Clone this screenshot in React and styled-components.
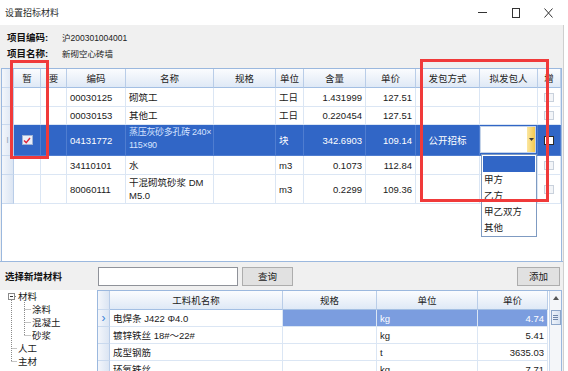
import React from 'react';
import styled, { createGlobalStyle } from 'styled-components';

const FONT = `"Liberation Sans", "Noto Sans CJK SC", sans-serif`;

const Global = createGlobalStyle`
  html, body { margin: 0; padding: 0; background: #fff; }
  body {
    font-family: ${FONT};
    font-size: 9.5px;
    color: #1a1a1a;
    width: 568px;
    height: 371px;
    overflow: hidden;
  }
  * { box-sizing: border-box; }
`;

const Page = styled.div`
  position: relative;
  width: 568px;
  height: 371px;
  display: flex;
  flex-direction: column;
  background: #fff;
`;

/* ---------- title bar ---------- */
const TitleBar = styled.div`
  height: 25px;
  display: flex;
  align-items: center;
  justify-content: space-between;
  padding-left: 5px;
  background: #fff;
  flex-shrink: 0;
`;
const Title = styled.span`
  font-size: 9px;
  color: #2a2a2a;
`;
const Controls = styled.div`
  display: flex;
  padding-right: 3px;
`;
const CtrlBtn = styled.div`
  width: 33px;
  height: 25px;
  display: flex;
  align-items: center;
  justify-content: center;
`;

/* ---------- body ---------- */
const Body = styled.div`
  width: 564px;
  flex: 1;
  background: #f0f0f0;
  border-right: 1px solid #cfcfcf;
  display: flex;
  flex-direction: column;
`;
const Info = styled.div`
  height: 43px;
  padding: 4px 0 0 7px;
  flex-shrink: 0;
`;
const InfoRow = styled.div`
  display: flex;
  align-items: center;
  height: 16px;
`;
const InfoLabel = styled.span`
  width: 55px;
  font-weight: bold;
  font-size: 9.5px;
  color: #111;
`;
const InfoValue = styled.span`
  font-size: 8.5px;
  color: #222;
`;

/* ---------- top grid ---------- */
const topCols = [12, 27, 26, 59, 88, 62, 28, 62, 50, 64, 58, 23];
const topTemplate = topCols.map((c) => c + 'px').join(' ');

const TopGrid = styled.div`
  height: 193px;
  margin: 0 1px 0 1px;
  background: #fff;
  border: 1px solid #9bb8de;
  border-bottom: none;
  flex-shrink: 0;
`;
const Row = styled.div`
  display: grid;
  grid-template-columns: ${(p) => p.$template};
  height: ${(p) => p.$h}px;
`;
const HeadCell = styled.div`
  display: flex;
  align-items: center;
  justify-content: center;
  background: linear-gradient(#fbfcfe, #dfe9f6);
  border-right: 1px solid #b9cde8;
  border-bottom: 1px solid #a3bfe3;
  color: #222;
  white-space: nowrap;
  overflow: hidden;
`;
const RowHead = styled.div`
  display: flex;
  align-items: center;
  justify-content: center;
  background: linear-gradient(to right, #f3f6fb, #dbe5f3);
  border-right: 1px solid #b9cde8;
  border-bottom: 1px solid #c9d9ee;
  color: ${(p) => (p.$accent ? '#3b7ed8' : '#9aa9bd')};
  font-size: ${(p) => (p.$accent ? '12px' : '9px')};
  line-height: 1;
`;
const Cell = styled.div`
  display: flex;
  flex-direction: column;
  justify-content: ${(p) => (p.$top ? 'flex-start' : 'center')};
  align-items: ${(p) =>
    p.$align === 'right' ? 'flex-end' : p.$align === 'center' ? 'center' : 'flex-start'};
  padding: ${(p) => (p.$top ? '1px 1px 0 3px' : '0 3px')};
  border-right: 1px solid ${(p) => (p.$sel ? '#4f7dd0' : '#dbe6f4')};
  border-bottom: 1px solid ${(p) => (p.$sel ? '#4f7dd0' : '#dbe6f4')};
  background: ${(p) => (p.$sel ? '#3166c6' : p.$hl ? '#7b9ddf' : '#fff')};
  color: ${(p) => (p.$sel || p.$hl ? '#fff' : '#1a1a1a')};
  line-height: 13px;
  white-space: nowrap;
  overflow: visible;
  position: relative;
`;
const Line = styled.span`
  display: block;
  color: ${(p) => (p.$soft ? '#d6e3ff' : 'inherit')};
  font-size: ${(p) => (p.$tight ? '9px' : 'inherit')};
  letter-spacing: ${(p) => (p.$tight ? '-0.3px' : '0')};
`;
const CheckBox = styled.span`
  width: 10px;
  height: 9px;
  border: 1px solid ${(p) => (p.$dark ? '#2a2a2a' : '#c9d1dc')};
  background: ${(p) => (p.$dark ? '#fff' : '#f3f5f8')};
  display: flex;
  align-items: center;
  justify-content: center;
`;
const RedCheck = styled.span`
  width: 11px;
  height: 10px;
  background: #e9eef8;
  border: 1px solid #9fb3d6;
  display: flex;
  align-items: center;
  justify-content: center;
`;

const Editor = styled.div`
  position: absolute;
  left: 0;
  top: 1px;
  right: 1px;
  bottom: 2px;
  background: #fff;
  border: 1px solid #c4d3e8;
  display: flex;
  justify-content: flex-end;
`;
const DropBtn = styled.div`
  width: 8px;
  height: 100%;
  background: linear-gradient(to right, #fbe7a1, #f4c84d);
  display: flex;
  align-items: center;
  justify-content: center;
`;
const DropList = styled.div`
  position: absolute;
  left: 1px;
  top: calc(100% - 1px);
  width: 56px;
  height: 83px;
  background: #fff;
  border: 1px solid #7f9bc2;
  padding: 1px;
  z-index: 5;
`;
const DropItem = styled.div`
  height: 16px;
  line-height: 16px;
  padding-left: 1px;
  color: #1a1a1a;
  background: ${(p) => (p.$active ? '#3166c6' : 'transparent')};
  font-size: 9.5px;
`;

const RedBox = styled.div`
  position: absolute;
  border: 3px solid #f03a3a;
  pointer-events: none;
  z-index: 10;
`;

/* ---------- lower panel ---------- */
const Lower = styled.div`
  flex: 1;
  border-top: 1px solid #9bb8de;
  display: flex;
  flex-direction: column;
  min-height: 0;
`;
const Toolbar = styled.div`
  height: 28px;
  display: flex;
  align-items: center;
  padding: 0 3px 0 5px;
  flex-shrink: 0;
`;
const ToolLabel = styled.span`
  width: 93px;
  font-weight: bold;
  font-size: 9.5px;
  color: #111;
`;
const SearchInput = styled.div`
  width: 140px;
  height: 19px;
  background: #fff;
  border: 1px solid #8f9299;
`;
const Button = styled.div`
  width: ${(p) => p.$w}px;
  height: 19px;
  margin-left: ${(p) => p.$ml || 0}px;
  background: #e1e1e1;
  border: 1px solid #adadad;
  display: flex;
  align-items: center;
  justify-content: center;
  color: #1a1a1a;
  font-size: 9.5px;
`;
const Spacer = styled.div`
  flex: 1;
`;
const Content = styled.div`
  flex: 1;
  display: flex;
  min-height: 0;
`;
const Tree = styled.div`
  position: relative;
  width: 97px;
  background: #fff;
  flex-shrink: 0;
`;
const TreeSvg = styled.svg`
  position: absolute;
  left: 0;
  top: 0;
`;
const TreeItem = styled.div`
  height: 13px;
  line-height: 13px;
  padding-left: ${(p) => (p.$level ? 32 : 18)}px;
  font-size: 9.5px;
  color: #1a1a1a;
`;

const lowCols = [12, 173, 94, 101, 70];
const lowTemplate = lowCols.map((c) => c + 'px').join(' ');

const LowGrid = styled.div`
  flex: 1;
  display: flex;
  background: #fff;
  border: 1px solid #9bb8de;
  border-bottom: none;
  margin-right: 1px;
  overflow: hidden;
`;
const LowMain = styled.div`
  flex: 1;
`;
const ScrollBar = styled.div`
  width: 12px;
  background: #f4f6f9;
  border-left: 1px solid #c9d8ec;
  display: flex;
  flex-direction: column;
  align-items: center;
`;
const ScrollArrow = styled.div`
  height: 14px;
  width: 100%;
  display: flex;
  align-items: center;
  justify-content: center;
`;
const Thumb = styled.div`
  margin-top: 5px;
  width: 10px;
  height: 15px;
  border: 1px solid #8da6c9;
  background: linear-gradient(to right, #eef3fa, #d5e1f1);
  display: flex;
  flex-direction: column;
  align-items: center;
  justify-content: center;
  gap: 1px;
`;
const Grip = styled.span`
  width: 5px;
  height: 1px;
  background: #6f86a8;
`;

const topRows = [
  { h: 19, code: '00030125', name: ['砌筑工'], unit: '工日', qty: '1.431999', price: '127.51' },
  { h: 18, code: '00030153', name: ['其他工'], unit: '工日', qty: '0.220454', price: '127.51' },
  { h: 31, sel: true, code: '04131772', name: ['蒸压灰砂多孔砖 240×', '115×90'], unit: '块', qty: '342.6903', price: '109.14', method: '公开招标' },
  { h: 19, code: '34110101', name: ['水'], unit: 'm3', qty: '0.1073', price: '112.84' },
  { h: 29, code: '80060111', name: ['干混砌筑砂浆 DM', 'M5.0'], unit: 'm3', qty: '0.2299', price: '109.36' },
];

const heads = ['暂', '要', '编码', '名称', '规格', '单位', '含量', '单价', '发包方式', '拟发包人', '增'];

const lowRows = [
  { name: '电焊条 J422 Φ4.0', unit: 'kg', price: '4.74', hl: true },
  { name: '镀锌铁丝 18#～22#', unit: 'kg', price: '5.41' },
  { name: '成型钢筋', unit: 't', price: '3635.03' },
  { name: '环氧铁丝', unit: 'kg', price: '7.71' },
];

function TopRow({ r }) {
  const s = r.sel;
  return (
    <Row $template={topTemplate} $h={r.h}>
      <RowHead>{s ? 'I' : ''}</RowHead>
      <Cell $sel={s} $align="center">
        {s && (
          <RedCheck>
            <svg width="8" height="7" viewBox="0 0 8 7">
              <path d="M1 3.5 L3.2 5.6 L7 1" stroke="#e0263a" strokeWidth="1.4" fill="none" />
            </svg>
          </RedCheck>
        )}
      </Cell>
      <Cell $sel={s} />
      <Cell $sel={s}>{r.code}</Cell>
      <Cell $sel={s} $top={r.name.length > 1}>
        {r.name.map((n, i) => (
          <Line key={i} $soft={s} $tight={s}>{n}</Line>
        ))}
      </Cell>
      <Cell $sel={s} />
      <Cell $sel={s}>{r.unit}</Cell>
      <Cell $sel={s} $align="right">{r.qty}</Cell>
      <Cell $sel={s} $align="right">{r.price}</Cell>
      <Cell $sel={s} $align="center">{r.method || ''}</Cell>
      <Cell $sel={s}>
        {s && (
          <>
            <Editor>
              <DropBtn>
                <svg width="5" height="3" viewBox="0 0 5 3">
                  <path d="M0 0 L5 0 L2.5 3 Z" fill="#3a3a3a" />
                </svg>
              </DropBtn>
            </Editor>
            <DropList>
              <DropItem $active />
              <DropItem>甲方</DropItem>
              <DropItem>乙方</DropItem>
              <DropItem>甲乙双方</DropItem>
              <DropItem>其他</DropItem>
            </DropList>
          </>
        )}
      </Cell>
      <Cell $sel={s} $align="center">
        <CheckBox $dark={s} />
      </Cell>
    </Row>
  );
}

export default function App() {
  return (
    <Page>
      <Global />
      <TitleBar>
        <Title>设置招标材料</Title>
        <Controls>
          <CtrlBtn>
            <svg width="9" height="9" viewBox="0 0 9 9">
              <path d="M0 4.5 H9" stroke="#333" strokeWidth="1" />
            </svg>
          </CtrlBtn>
          <CtrlBtn>
            <svg width="8" height="10" viewBox="0 0 8 10">
              <rect x="0.5" y="0.5" width="7" height="9" stroke="#333" fill="none" />
            </svg>
          </CtrlBtn>
          <CtrlBtn>
            <svg width="9" height="10" viewBox="0 0 9 10">
              <path d="M0.5 0.5 L8.5 9.5 M8.5 0.5 L0.5 9.5" stroke="#333" strokeWidth="1" />
            </svg>
          </CtrlBtn>
        </Controls>
      </TitleBar>

      <Body>
        <Info>
          <InfoRow>
            <InfoLabel>项目编码:</InfoLabel>
            <InfoValue>沪200301004001</InfoValue>
          </InfoRow>
          <InfoRow>
            <InfoLabel>项目名称:</InfoLabel>
            <InfoValue>新砌空心砖墙</InfoValue>
          </InfoRow>
        </Info>

        <TopGrid>
          <Row $template={topTemplate} $h={19}>
            <RowHead />
            {heads.map((h) => (
              <HeadCell key={h}>{h}</HeadCell>
            ))}
          </Row>
          {topRows.map((r) => (
            <TopRow key={r.code} r={r} />
          ))}
        </TopGrid>

        <Lower>
          <Toolbar>
            <ToolLabel>选择新增材料</ToolLabel>
            <SearchInput />
            <Button $w={51} $ml={4}>查询</Button>
            <Spacer />
            <Button $w={43}>添加</Button>
          </Toolbar>
          <Content>
            <Tree>
              <TreeSvg width="40" height="80" viewBox="0 0 40 80">
                <g stroke="#8a8a8a" strokeWidth="1" strokeDasharray="1 1" fill="none">
                  <path d="M11.5 10 V72 M11.5 58.5 H17 M11.5 71.5 H17" />
                  <path d="M24.5 10 V46 M24.5 19.5 H31 M24.5 32.5 H31 M24.5 45.5 H31" />
                  <path d="M15 6.5 H17" />
                </g>
                <rect x="8.5" y="3.5" width="6" height="6" fill="#fff" stroke="#8a8a8a" />
                <path d="M10 6.5 H13" stroke="#333" />
              </TreeSvg>
              <TreeItem>材料</TreeItem>
              <TreeItem $level={1}>涂料</TreeItem>
              <TreeItem $level={1}>混凝土</TreeItem>
              <TreeItem $level={1}>砂浆</TreeItem>
              <TreeItem>人工</TreeItem>
              <TreeItem>主材</TreeItem>
            </Tree>
            <LowGrid>
              <LowMain>
                <Row $template={lowTemplate} $h={19}>
                  <RowHead />
                  <HeadCell>工料机名称</HeadCell>
                  <HeadCell>规格</HeadCell>
                  <HeadCell>单位</HeadCell>
                  <HeadCell>单价</HeadCell>
                </Row>
                {lowRows.map((r, i) => (
                  <Row key={i} $template={lowTemplate} $h={17}>
                    <RowHead $accent={r.hl}>{r.hl ? '›' : ''}</RowHead>
                    <Cell>{r.name}</Cell>
                    <Cell $hl={r.hl} />
                    <Cell $hl={r.hl}>{r.unit}</Cell>
                    <Cell $hl={r.hl} $align="right">{r.price}</Cell>
                  </Row>
                ))}
              </LowMain>
              <ScrollBar>
                <ScrollArrow>
                  <svg width="6" height="4" viewBox="0 0 6 4">
                    <path d="M0 4 L3 0 L6 4 Z" fill="#555" />
                  </svg>
                </ScrollArrow>
                <Thumb>
                  <Grip />
                  <Grip />
                  <Grip />
                </Thumb>
              </ScrollBar>
            </LowGrid>
          </Content>
        </Lower>
      </Body>

      <RedBox style={{ left: 10, top: 60, width: 39, height: 99 }} />
      <RedBox style={{ left: 420, top: 59, width: 129, height: 143 }} />
    </Page>
  );
}
